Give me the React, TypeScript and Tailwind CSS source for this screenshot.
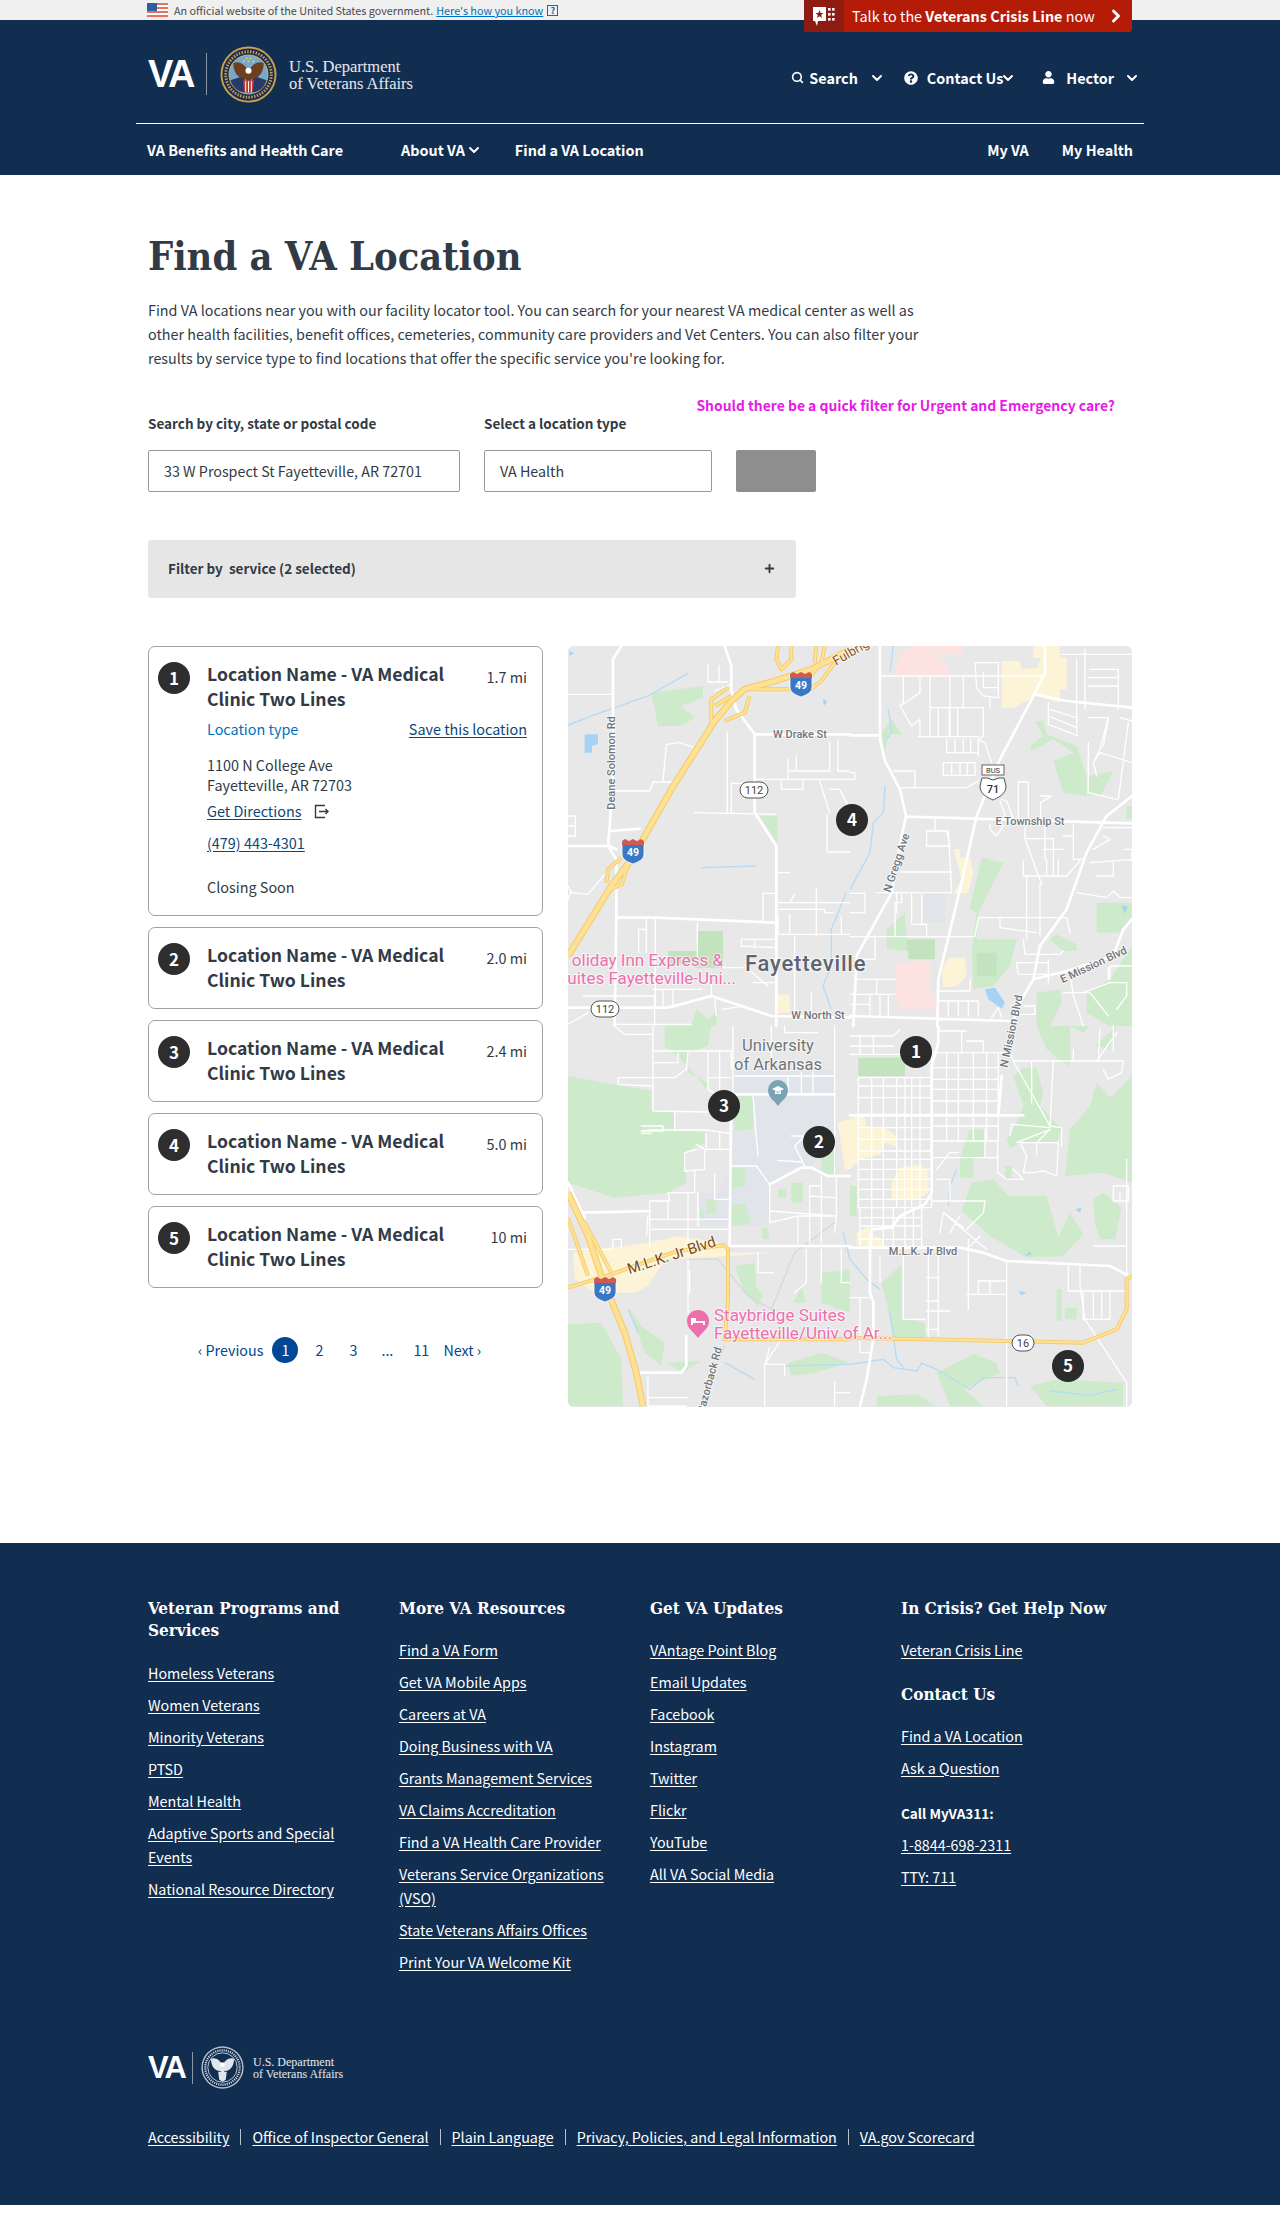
import React from 'react';
import { ChevronDown, ChevronRight, Plus, Search } from 'lucide-react';
import { FaQuestionCircle, FaUser } from 'react-icons/fa';

// Map geometry traced per quadrant at 3x, every quadrant is 282x380 in the final map
type Quad = {
  ox: number; oy: number;
  campus?: string; green?: string; dark?: string; cream?: string; pink?: string; water?: string; river?: string;
  rail?: string; minor: string; major: string; hwy?: string; hwyMain?: string;
};

const gridPath = (xs: number[], ys: number[]) => {
  let d = '';
  for (const x of xs) d += `M${x} ${ys[0]}V${ys[ys.length - 1]}`;
  for (const y of ys) d += `M${xs[0]} ${y}H${xs[xs.length - 1]}`;
  return d;
};

const QUADS: Quad[] = [
  {
    ox: 0, oy: 0,
    green: 'M250 140L405 120L405 155L340 180L380 215L340 240L270 240Z M575 510H628V590Z M370 1140L385 1090L420 1120L450 1090L445 1140Z',
    dark: 'M390 855H465V965H380V955H300V915H385Z',
    cream: 'M625 1045H665V1100H625Z',
    water: 'M50 265H90V295L72 300V320H50Z M765 160L778 165L768 180Z M5 15L18 22L5 30Z',
    river: 'M0 238L70 210L150 182L240 150L360 82 M400 665L565 660 M835 740L790 850L790 960L765 1020L790 1090',
    minor: 'M0 145H135 M145 435H245L255 408H310 M285 405L295 295L335 290L380 305 M420 55V108H480 M453 58V108 M440 135L490 115 M478 258V500 M380 500L625 505 M490 500V412H560 M560 400H846 M660 340V400 M685 330V375 M665 375H785V290 M810 280V375H846 M640 405V430H705V405 M755 405L785 500 M785 430H815L846 490 M777 505V618H846 M630 680H665 M585 825V742H625 M630 770H846 M680 745L665 770 M745 725V870 M630 790H770V800H795 M630 865H846 M680 870V1110 M730 1040V1100 M630 805V865 M665 805V860 M820 810V865 M520 880H620 M520 880V900L620 905 M560 880V905 M0 510H22V570H0 M0 540H22 M0 720L10 740L60 745L115 680 M0 760L10 735 M235 820V920 M262 820V1080 M388 830V960 M210 850H235 M212 850V920 M465 965H525 M530 960L600 1020 M45 1050H260V1140 M285 1030V1085 M315 1030V1085 M255 1030H400 M430 1000V1050 M440 1060L445 1110 M465 1090L530 1080 M0 1135L60 1100 M140 1135H370 M555 1010H620',
    major: 'M160 0L135 40V380L125 545L120 600L145 640V815L140 1140 M470 0L490 60V130L505 190L560 265V500L625 600V1140 M560 265H846 M130 555L215 548 M0 600H125L145 610 M150 815H260L620 830 M0 1085H300L430 1050L610 1110L846 1115',
    hwyMain: 'M0 930L130 720L190 640L310 430L440 225L490 165L530 130L620 105L730 70L810 30L846 10',
    hwy: 'M430 230V160L480 125 M440 180L490 150 M470 225L530 200L545 150 M550 130H660L720 135L760 105L800 50 M630 0L625 40L640 70L670 40V0 M770 0L760 50L720 100 M745 0L740 50 M115 710L120 670L160 635 M160 720L180 655 M130 730L160 715',
  },
  {
    ox: 282, oy: 0,
    pink: 'M135 85L150 20L190 0H340V25H255L295 60V95Z M135 950L240 945V1040L265 1060V1090H155L135 1060Z',
    cream: 'M455 45H510L515 70L560 65L575 35H550V0H630V35H650V130H630V170L560 150L490 185H455Z M310 610H330V635H360L370 680L355 740L310 745L335 700Z M275 975L295 935H345L350 990L320 1020L280 1025Z',
    green: 'M95 260L125 220L155 265H115L105 320Z M540 300L580 270L555 225H580L590 265L680 300L710 390V450L640 440L610 345L670 320L610 280L545 315Z M715 390L790 375L755 445L715 450Z M395 635L460 650L385 800L380 880H500L480 960L430 1020L370 1030L365 910L380 800L358 790Z M740 770H846V810L810 860H740Z M110 850L165 800L170 880H175V915L110 910Z M600 880L620 865L680 895V915H640Z M846 480H830V520H846Z M560 1040L630 1030L635 1070L600 1140H560Z M710 1040L780 1000L846 900V1140H775L710 1100Z',
    dark: 'M170 880H255V940H175V915H170Z M380 920H440V990H380Z',
    campus: 'M220 740H285V830H220Z',
    water: 'M405 1030L435 1025L465 1070L455 1088L415 1060Z M815 780H832L825 805Z',
    river: 'M105 420L100 500L70 530L60 620L0 730 M130 0L120 80 M115 190L125 260L110 280',
    minor: 'M90 90H585 M240 90V270 M160 90V170L150 180L185 240L210 220V270 M210 95V140L160 175 M300 95V270 M340 95V185 M240 185H400V270L385 280V330 M265 185V270 M298 185V270 M323 185V270 M205 272H385 M375 50H445V155L400 150L380 125Z M400 80V125H445 M420 155V185 M385 280L405 290L425 350 M290 280V320H385 M315 280V320 M340 280V320 M362 280V320 M280 350H375V388H280Z M305 350V388 M330 350V388 M352 350V388 M130 375H195V425H155 M155 425H350L385 405 M0 380H15V400H0 M230 555H290L300 600H230Z M255 515V555 M295 555L305 740 M150 678H305 M80 740H305 M0 742H45V800H0 M155 740V770H135V870 M185 740V830 M215 745V835 M185 835H230V870 M0 872H375 M375 870L385 815H650L660 860 M450 815V845L560 860 M530 690V880 M570 715V870 M525 578L575 715 M525 578H610V690 M520 645V690H650L690 645 M590 640V690 M625 640V690 M525 545V578 M585 530V640 M640 570H670V640H700 M670 535V600 M580 610H640 M720 650L846 640 M740 690H790V650 M680 740L770 755L790 735L810 755H846 M825 610H846V645 M760 570L780 580L730 610 M760 545H846 M595 170V235L685 270 M600 190L680 215 M595 210L680 245 M635 25H846 M705 10V190 M680 40V260 M720 70H805V190 M715 95H805 M715 120H805 M715 215H775L750 310L730 350L740 390 M775 220L760 300 M730 350L750 320L846 350 M810 215L846 225 M835 230L805 460 M715 290V440L800 460 M455 460L470 465L490 520 M450 465L470 520 M505 408H535V520 M505 408V520 M572 450H605L572 470V525 M420 535V550L440 570L460 540 M520 880L525 925H630L640 915 M500 950H595V985H505Z M595 940V1010 M660 975L670 1050L700 1140 M640 1040H720L775 1110 M700 1040L780 1010H830V1050L800 1090 M780 1000V960H846 M775 965V1000 M20 1000H135 M80 1000V1045 M0 1045H135 M60 1045V1110 M90 1045V1110 M115 1045V1110 M0 1075H60 M270 1035H360V1000 M265 1065H385V1110 M295 1065V1110 M325 1065V1110 M355 1065V1110 M425 1115L445 1085L455 1115 M520 1080H555V1105H510 M140 740V800 M20 940H75V870',
    major: 'M90 0V280L105 345L150 430L168 510L155 570L125 740L20 930L10 1140 M0 268H90 M168 512L846 532 M585 0V80L545 160L450 340L380 510L330 730L265 1000L262 1140 M555 145L650 165L846 185 M846 450L770 510L710 620L650 790L570 900L550 1000L510 1070L490 1125 M0 1110L480 1125 M550 1000L650 975L790 930L820 850L846 820',
  },
  {
    ox: 0, oy: 380,
    campus: 'M490 130H800V210H490Z M555 210H800V350L790 370L730 420H700L605 475L570 390Z M490 315H555L605 475V590L580 600H400L390 500H450L490 420Z',
    green: 'M0 150L250 195V250L320 260V310L410 320V350L350 380L355 470L300 500L140 515L0 470Z M290 0H430L420 60L360 80V140L420 170L415 190L360 120L290 60Z M495 210H555V310L500 315Z M490 425H530V480L490 490Z M490 535H530L550 590L490 600Z M415 520H445V565H415Z M395 550H407V580H395Z M580 605H600L605 640H585Z M630 490H655V515H630Z M670 470H705V530H670Z M500 720L560 710L565 780L585 810L570 840L530 800Z M675 830L700 780L715 830Z M760 740L846 730V860L760 830Z M760 360H805V445H760Z M0 895L100 890L160 1000L165 1140H0Z M180 840L220 900L290 950L280 1020L230 980Z M295 1010L400 1005L345 1040Z M660 1010L760 980L846 1010L740 1040L670 1050Z',
    cream: 'M15 680L240 650L330 630L450 650L490 680H610L490 690L290 700L240 780L200 800H80L20 760Z M810 290L846 280V430H830Z',
    river: 'M180 850L210 920 M470 1010L560 1060 M650 1020L846 1015 M825 620L846 700',
    rail: 'M360 700H450L540 810L610 850L680 680L800 590 M470 960L400 1140',
    minor: 'M255 0V255L420 258 M255 75H490V130 M255 110H330V80 M360 80L355 130L320 155H150V175L250 180 M420 80V190L445 205 M425 155H490 M455 80V190 M320 258V315 M220 300H285V315H220L250 312H415L485 322 M220 322H250 M415 322V370H485 M455 322V365 M350 380L385 370 M350 380V435L410 430V370 M385 355L410 370 M380 435V500 M440 445V520H490 M380 500H300L305 525H245V660 M360 500V660 M390 500V600 M245 580H480 M245 610H480 M300 525V580 M240 570L235 630 M135 670V640H160V670 M490 420H565L605 475V590L690 570H800 M605 555L800 570 M690 570V650 M725 480V650 M760 450V650 M805 450V570L800 620 M725 510L800 515 M725 480H760 M555 210L570 390 M670 330H710L680 360L710 420 M630 403L700 408 M500 150H800 M495 0V205 M610 0V130 M650 0V20H750 M700 140V205 M735 140V205 M660 150V205 M570 680V740H615 M715 670V770L680 800 M760 670V770 M820 670V770H846 M360 700V860 M365 735V800 M140 850L170 925L205 1030 M140 0L170 25H255 M605 965L590 1020V1140 M640 940L590 1015H650V1050 M240 1050V1140H355 M240 1115H360 M800 1100H846 M800 1070V1140 M800 0V450 M0 670H130',
    major: 'M490 200L485 660 M490 205H800 M480 660H846 M605 475L700 425H730L780 450H846 M0 470L50 575 M355 930V1020L340 1040H215 M45 560L245 555',
    hwy: 'M0 785L130 745L200 720L330 675L470 658L480 670V820L470 940H846 M0 575L60 750 M50 590L130 740',
    hwyMain: 'M0 500L60 630L100 750L170 920L205 1040L225 1140',
  },
  {
    ox: 282, oy: 380,
    cream: 'M0 280L40 265L50 300L105 305L125 320L145 340L135 360L105 350L90 385L30 400L0 430Z M125 470L150 425L205 415L235 435V500L200 520H125Z M20 620L55 600L70 630L100 640L95 670L20 655Z',
    green: 'M330 395L360 310H405V395H370V455H330Z M520 125H560L580 200L570 240L635 310L620 350H510L480 370L470 340L500 290L520 240L490 150Z M645 450L660 310L720 240L740 170L780 215L846 150V470L760 440Z M335 555L365 470L430 460L475 510H590L625 635L660 560L700 625L640 690L530 695L420 630Z M730 520L760 500L815 545L795 640H750L735 590Z M95 770L155 715V875L225 890V940H130L110 830Z M620 790H635V885H620Z M645 845H680V880H645Z M260 1040L370 985L440 1010L450 1040L340 1090L400 1140H300Z M80 1110L200 1105L260 1140H80Z M540 1080L620 1060L820 1070V1140H590Z M560 0H660V120L640 110L590 70Z M735 60L800 0L780 70Z M660 0H720L700 20Z M465 420H485V460H465Z M0 480H20V570H0Z',
    dark: 'M25 95H165V150H25Z',
    water: 'M505 795L530 800L515 808Z M525 690L540 675L545 685Z M675 550L695 545L690 560Z',
    river: 'M0 1015L100 1000L130 1025L200 1035L215 1012L260 1030L360 1090L400 1055H495L505 1080 M120 860L140 1000L160 1025 M600 1095L720 1108L800 1090 M0 700L50 760L90 790 M320 430L300 480L295 540',
    minor:
      gridPath([25, 65, 100, 140, 165, 185, 210, 245], [155, 180, 215, 265, 305, 340, 375, 400, 430, 460, 490, 520, 545]) +
      gridPath([30, 65, 100, 130, 165, 190, 215], [545, 575, 600, 640, 665]) +
      gridPath([245, 290, 325, 370, 410, 445], [80, 125, 160, 190, 225, 265, 300, 345]) +
      ' M245 80H480L490 105H820 M820 105L815 140L775 160L760 130 M490 105L600 300 M545 105V230 M610 105L600 300L635 305V360 M500 350L600 310L560 350V385 M510 350L530 390L520 440H550L580 435L620 450L625 350H510 M480 330L485 295L600 305 M470 460H520L490 430 M443 345V440L470 460 M245 395H445 M405 310V395 M260 430L300 380H325 M260 460H300V520 M245 525H405L400 560L350 610 M340 605L280 560L270 620 M280 560L410 670 M300 620L330 570 M355 665L390 630 M355 640V850 M350 805H470V765 M385 805V765H470 M420 765V805 M470 710V1140 M730 660H830V710 M655 720V795H830 M690 720V780L705 880L830 1070V1140 M700 800V880 M730 800V880 M755 800V880 M780 800V880 M700 880H780 M830 400V750 M790 480H835V525H790V480 M810 525V500 M160 690V880H225 M235 690V940 M265 690V930 M230 755H265 M230 825H265 M230 855H300 M230 910H265 M0 815H60 M30 815V980H60 M90 690V770 M0 30H130L150 10 M0 60H130 M0 85H150 M30 30V85 M70 30V85 M270 15H350 M335 15V80 M350 45H400V80 M670 70V105 M740 105L800 20 M790 75V0 M745 105L750 10',
    major: 'M265 0V50L245 120V500L225 535L150 570L125 605L65 610L60 660V800L70 830V940L50 1060L30 1140 M0 665H330L400 680L470 705L780 720L846 755 M455 150L445 270 M0 268H520',
    hwy: 'M0 935L700 950L800 910L830 850V760L846 750',
  },
];

const MAP_TEXT = "#70757a";

const Shield = ({ x, y, n }: { x: number; y: number; n: string }) => (
  <g transform={`translate(${x} ${y})`}>
    <path d="M-11 -10H11V3C11 9 5 11 0 13C-5 11 -11 9 -11 3Z" fill="#3b78c4" stroke="#fff" strokeWidth="0.8" />
    <path d="M-11 -10L-8 -12L-4 -10L0 -12L4 -10L8 -12L11 -10V-6H-11Z" fill="#d05a52" />
    <text x="0" y="5" textAnchor="middle" fontSize="10.5" fontWeight="700" fill="#fff">{n}</text>
  </g>
);

const RoadBadge = ({ x, y, n, w = 28 }: { x: number; y: number; n: string; w?: number }) => (
  <g transform={`translate(${x} ${y})`}>
    <rect x={-w / 2} y="-8" width={w} height="16" rx="8" fill="#fff" stroke="#555" strokeWidth="1" />
    <text x="0" y="4" textAnchor="middle" fontSize="11" fill="#444">{n}</text>
  </g>
);

const Label = ({ x, y, s, rot = 0, size = 11, fill = MAP_TEXT, weight = 500, anchor = 'middle', spacing = 0 }: { x: number; y: number; s: string; rot?: number; size?: number; fill?: string; weight?: number; anchor?: 'middle' | 'start' | 'end'; spacing?: number }) => (
  <text
    transform={`translate(${x} ${y}) rotate(${rot})`}
    textAnchor={anchor}
    fontSize={size}
    fill={fill}
    fontWeight={weight}
    letterSpacing={spacing}
    stroke="#ffffff"
    strokeWidth="2"
    paintOrder="stroke"
    strokeOpacity="0.65"
  >
    {s}
  </text>
);

const Pin = ({ x, y, n }: { x: number; y: number; n: string }) => (
  <g transform={`translate(${x} ${y})`}>
    <circle r="16" fill="#2b2b2b" />
    <text x="0" y="6" textAnchor="middle" fontSize="17" fontWeight="700" fill="#fff" fontFamily="'Noto Sans CJK SC', sans-serif">{n}</text>
  </g>
);

const MapView = () => (
  <div className="w-[564px] h-[761px] rounded-md overflow-hidden bg-[#e8e8e8] shrink-0">
    <svg viewBox="0 0 564 761" width="564" height="761" fontFamily="Roboto, 'Liberation Sans', sans-serif">
      <rect width="564" height="761" fill="#e8e8e8" />
      {QUADS.map((q) => (
        <g key={`f${q.ox}-${q.oy}`} transform={`translate(${q.ox} ${q.oy}) scale(0.3333)`}>
          {q.campus && <path d={q.campus} fill="#e1e5ea" />}
          {q.green && <path d={q.green} fill="#cdebca" />}
          {q.dark && <path d={q.dark} fill="#c2e3be" />}
          {q.cream && <path d={q.cream} fill="#fdf3d6" />}
          {q.pink && <path d={q.pink} fill="#fce3e1" />}
          {q.water && <path d={q.water} fill="#a6d3f5" />}
          {q.river && <path d={q.river} fill="none" stroke="#b5dbf7" strokeWidth="4" />}
          {q.rail && <path d={q.rail} fill="none" stroke="#d8d8d8" strokeWidth="4" />}
        </g>
      ))}
      {QUADS.map((q) => (
        <g key={`m${q.ox}-${q.oy}`} transform={`translate(${q.ox} ${q.oy}) scale(0.3333)`} fill="none" strokeLinejoin="round" strokeLinecap="round">
          <path d={q.minor} stroke="#fff" strokeWidth="4" />
          <path d={q.major} stroke="#fff" strokeWidth="8" />
        </g>
      ))}
      {QUADS.map((q) => (
        <g key={`h${q.ox}-${q.oy}`} transform={`translate(${q.ox} ${q.oy}) scale(0.3333)`} fill="none" strokeLinejoin="round">
          {q.hwy && <path d={q.hwy} stroke="#f6c961" strokeWidth="12" />}
          {q.hwyMain && <path d={q.hwyMain} stroke="#f6c961" strokeWidth="20" />}
          {q.hwy && <path d={q.hwy} stroke="#fde296" strokeWidth="7" />}
          {q.hwyMain && <path d={q.hwyMain} stroke="#fde296" strokeWidth="14" />}
        </g>
      ))}

      <Label x={290} y={7} s="Fulbright" rot={-30} size={13} fill="#8a5a20" weight={400} />
      <Label x={232} y={92} s="W Drake St" />
      <Label x={47} y={117} s="Deane Solomon Rd" rot={-90} />
      <Label x={332} y={218} s="N Gregg Ave" rot={-72} />
      <Label x={462} y={179} s="E Township St" />
      <Label x={527} y={322} s="E Mission Blvd" rot={-25} />
      <Label x={447} y={386} s="N Mission Blvd" rot={-78} />
      <Label x={250} y={373} s="W North St" />
      <Label x={355} y={609} s="M.L.K. Jr Blvd" />
      <Label x={105} y={614} s="M.L.K. Jr Blvd" rot={-18} size={15} fill="#7a4a14" weight={400} />
      <Label x={145} y={735} s="Razorback Rd" rot={-75} />
      <Label x={177} y={325} s="Fayetteville" size={22} fill="#5d6570" anchor="start" spacing={0.8} />
      <Label x={210} y={405} s="University" size={16.5} weight={400} />
      <Label x={210} y={424} s="of Arkansas" size={16.5} weight={400} />
      <Label x={155} y={320} s="oliday Inn Express &" size={17} fill="#ee6fae" anchor="end" weight={400} />
      <Label x={168} y={338} s="uites Fayetteville-Uni..." size={17} fill="#ee6fae" anchor="end" weight={400} />
      <Label x={146} y={675} s="Staybridge Suites" size={17} fill="#ee6fae" anchor="start" weight={400} />
      <Label x={146} y={693} s="Fayetteville/Univ of Ar..." size={17} fill="#ee6fae" anchor="start" weight={400} />

      <g transform="translate(130 677)">
        <path d="M0 15C-4 9 -11 6 -11 -2A11 11 0 0 1 11 -2C11 6 4 9 0 15Z" fill="#ee6fae" />
        <path d="M-7 -5V2H-5V0H5V2H7V-2H-2V-5Z" fill="#fff" />
      </g>
      <g transform="translate(210 445)">
        <path d="M0 15C-3 10 -10 7 -10 -1A10 10 0 0 1 10 -1C10 7 3 10 0 15Z" fill="#7aa3b5" />
        <path d="M-6 -2L0 -5L6 -2L0 1Z M-3 0V3H3V0L0 2Z" fill="#fff" />
      </g>

      <Shield x={233} y={38} n="49" />
      <Shield x={65} y={205} n="49" />
      <Shield x={37} y={643} n="49" />
      <RoadBadge x={186} y={144} n="112" />
      <RoadBadge x={37} y={363} n="112" />
      <RoadBadge x={455} y={697} n="16" w={22} />
      <g transform="translate(425 143)">
        <rect x="-11" y="-24" width="22" height="10" fill="#fff" stroke="#444" strokeWidth="0.8" />
        <text x="0" y="-16" textAnchor="middle" fontSize="7.5" fill="#333">BUS</text>
        <path d="M-11 -11H-6L0 -9L6 -11H11L13 -3C13 6 4 9 0 11C-4 9 -13 6 -13 -3Z" fill="#fff" stroke="#555" strokeWidth="1" />
        <text x="0" y="4" textAnchor="middle" fontSize="11" fontWeight="500" fill="#333">71</text>
      </g>

      <Pin x={348} y={406} n="1" />
      <Pin x={251} y={496} n="2" />
      <Pin x={156} y={460} n="3" />
      <Pin x={284} y={174} n="4" />
      <Pin x={500} y={720} n="5" />
    </svg>
  </div>
);

const Seal = ({ size, mono }: { size: number; mono?: boolean }) => (
  <svg width={size} height={size} viewBox="0 0 60 60" className="shrink-0">
    <circle cx="30" cy="30" r="29.5" fill={mono ? '#b5c0cd' : '#c9a24a'} />
    <circle cx="30" cy="30" r="27.5" fill={mono ? '#112e51' : '#232b48'} />
    <circle cx="30" cy="30" r="24" fill="none" stroke={mono ? '#dfe5ec' : '#b9a66a'} strokeWidth="3" strokeDasharray="1.5 1.5" />
    <circle cx="30" cy="30" r="20.5" fill={mono ? '#112e51' : '#78a9c9'} stroke={mono ? '#fff' : '#d8b860'} strokeWidth="1" />
    {!mono && (
      <>
        <path d="M11 36L26 31V49C18 48 13 43 11 36Z" fill="#273a68" />
        <path d="M49 36L34 31V49C42 48 47 43 49 36Z" fill="#273a68" />
        <circle cx="28" cy="13" r="1" fill="#e8cf6a" />
        <circle cx="32" cy="13" r="1" fill="#e8cf6a" />
        <circle cx="30" cy="16" r="1" fill="#e8cf6a" />
        <circle cx="25" cy="16" r="1" fill="#e8cf6a" />
        <circle cx="35" cy="16" r="1" fill="#e8cf6a" />
      </>
    )}
    <path d="M30 27C27 19 19 15 14 18C14 27 18 34 27 35L30 38L33 35C42 34 46 27 46 18C41 15 33 19 30 27Z" fill={mono ? '#dfe5ec' : '#6e3f1f'} />
    <circle cx="30" cy="26" r="3.2" fill="#fff" />
    <path d="M24 36H36L34.5 47L30 50L25.5 47Z" fill={mono ? '#dfe5ec' : '#c43a36'} />
    {!mono && <path d="M27 37V48M30 37V49M33 37V48" stroke="#fff" strokeWidth="1" />}
  </svg>
);

const VaLogo = ({ small }: { small?: boolean }) =>
  small ? (
    <div className="flex items-center text-white">
      <span className="font-['Liberation_Sans',sans-serif] font-bold text-[31px] leading-none tracking-[-2px] w-[40px]">VA</span>
      <span className="w-px h-[32px] bg-white/50 ml-[4px] mr-[8px]" />
      <Seal size={43} mono />
      <div className="ml-[9px] font-['Liberation_Serif',serif] text-[12px] leading-[12px] text-white/90">
        <div>U.S. Department</div>
        <div>of Veterans Affairs</div>
      </div>
    </div>
  ) : (
    <div className="flex items-center text-white">
      <span className="font-['Liberation_Sans',sans-serif] font-bold text-[38px] leading-none tracking-[-2.5px] w-[50px]">VA</span>
      <span className="w-px h-[42px] bg-white/50 ml-[8px] mr-[13px]" />
      <Seal size={57} />
      <div className="ml-[12px] mt-[1px] font-['Liberation_Serif',serif] text-[16.5px] leading-[17px] text-white/90">
        <div>U.S. Department</div>
        <div>of Veterans Affairs</div>
      </div>
    </div>
  );

const Flag = () => (
  <svg width="21" height="14" viewBox="0 0 21 14" className="shrink-0">
    <rect width="21" height="14" fill="#fff" />
    {[0, 4, 8, 12].map((y) => <rect key={y} y={y} width="21" height="2" fill="#e8705f" />)}
    <rect width="10" height="8" fill="#2f5f9e" />
  </svg>
);

const CrisisIcon = () => (
  <svg width="24" height="22" viewBox="0 0 24 22">
    <path d="M1 2H14V16H6L5 21L3 16H1Z" fill="#fff" />
    <path d="M7.5 5L8.6 8H11.5L9.2 10L10 13L7.5 11.2L5 13L5.8 10L3.5 8H6.4Z" fill="#8f1c13" />
    {[3, 8, 13].map((y) => [16, 20].map((x) => <rect key={`${x}-${y}`} x={x} y={y} width="2.6" height="2.6" fill="#fff" />))}
  </svg>
);

const Card = ({ n, mi, children }: { n: number; mi: string; children?: React.ReactNode }) => (
  <div className="border border-[#a0a0a0] rounded-[7px] pt-[14px] pb-[16px] pl-[9px] pr-[15px] flex">
    <span className="w-[32px] h-[32px] mt-[1px] rounded-full bg-[#2e2e2e] text-white font-bold text-[17px] flex items-center justify-center shrink-0">{n}</span>
    <div className="ml-[17px] flex-1">
      <div className="flex justify-between">
        <div className="text-[17.6px] leading-[25px] font-bold text-[#323a45] w-[260px]">
          Location Name - VA Medical Clinic Two Lines
        </div>
        <span className="text-[14.4px] leading-[26px] mt-[3px] text-[#323a45]">{mi}</span>
      </div>
      {children}
    </div>
  </div>
);

const LINK = 'text-[#0b4778] underline underline-offset-2';

const FooterList = ({ items }: { items: string[] }) => (
  <ul className="flex flex-col gap-[8px] w-[215px]">
    {items.map((t) => (
      <li key={t} className="text-[14.3px] leading-[24px] underline underline-offset-2">{t}</li>
    ))}
  </ul>
);

const FOOT_HEAD = "font-['DejaVu_Serif_Condensed','DejaVu_Serif',serif] font-bold text-[17px] leading-[22px]";

export default function App() {
  return (
    <div className="font-['Noto_Sans_CJK_SC','Liberation_Sans',sans-serif] bg-white text-[#323a45] w-full min-h-[2233px]">
      {/* gov banner */}
      <div className="relative h-[20px] bg-[#f0f0f0] flex items-center pl-[147px] text-[10.8px] leading-[20px] text-[#4a4a4a]">
        <Flag />
        <span className="ml-[6px]">An official website of the United States government.</span>
        <span className="ml-[3px] text-[#0071bc] underline">Here's how you know</span>
        <span className="ml-[4px] w-[11px] h-[11px] border border-[#0071bc] text-[#0071bc] text-[9px] leading-[10px] text-center font-bold">?</span>
        <div className="absolute z-10 left-[804px] top-0 w-[328px] h-[32px] bg-[#b51c08] rounded-b-[3px] flex items-center text-white overflow-hidden">
          <div className="w-[40px] h-full bg-[#8f1c13] flex items-center justify-center"><CrisisIcon /></div>
          <span className="ml-[8px] text-[14.4px] leading-[32px]">Talk to the <b className="font-bold">Veterans Crisis Line</b> now</span>
          <ChevronRight className="ml-[11px]" size={20} strokeWidth={3.5} />
        </div>
      </div>

      {/* header */}
      <header className="bg-[#112e51] h-[155px] text-white px-[148px]">
        <div className="h-[103px] flex items-center justify-between pt-[5px]">
          <VaLogo />
          <div className="flex items-center text-[14.4px] font-semibold mt-[8px] mr-[-8px]">
            <Search size={13} strokeWidth={3} />
            <span className="ml-[5px]">Search</span>
            <ChevronDown className="ml-[11px]" size={16} strokeWidth={3} />
            <FaQuestionCircle className="ml-[19px]" size={14} />
            <span className="ml-[9px]">Contact Us</span>
            <ChevronDown className="-ml-[3px]" size={16} strokeWidth={3} />
            <FaUser className="ml-[26px]" size={13} />
            <span className="ml-[11px]">Hector</span>
            <ChevronDown className="ml-[10px]" size={16} strokeWidth={3} />
          </div>
        </div>
        <div className="h-px bg-white -mx-[12px]" />
        <nav className="h-[51px] pt-[1px] flex items-center text-[14.4px] font-semibold -ml-[1px] -mr-[1px]">
          <span className="relative w-[254px]">
            VA Benefits and Health Care
            <ChevronDown className="absolute left-[133px] top-[4px]" size={15} strokeWidth={3} />
          </span>
          <span>About VA</span>
          <ChevronDown className="ml-[1px]" size={16} strokeWidth={3} />
          <span className="ml-[33px]">Find a VA Location</span>
          <span className="ml-auto">My VA</span>
          <span className="ml-[33px]">My Health</span>
        </nav>
      </header>

      <main className="px-[148px] pt-[57px] h-[1368px]">
        <h1 className="font-['DejaVu_Serif_Condensed','DejaVu_Serif',serif] font-bold text-[39.4px] leading-[48px] text-[#323a45]">Find a VA Location</h1>
        <p className="mt-[18px] w-[785px] text-[14.35px] leading-[24px]">
          Find VA locations near you with our facility locator tool. You can search for your nearest VA medical center as well as other health facilities, benefit offices, cemeteries, community care providers and Vet Centers. You can also filter your results by service type to find locations that offer the specific service you're looking for.
        </p>

        <div className="relative mt-[41px]">
          <span className="absolute right-[17px] top-[-18px] text-[13.9px] leading-[24px] font-semibold text-[#e81ae8]">
            Should there be a quick filter for Urgent and Emergency care?
          </span>
          <div className="flex items-start">
            <div className="w-[312px]">
              <div className="text-[13.5px] leading-[24px] font-semibold">Search by city, state or postal code</div>
              <div className="mt-[15px] h-[42px] border border-[#999] rounded-[2px] px-[15px] text-[14.3px] leading-[40px]">33 W Prospect St Fayetteville, AR 72701</div>
            </div>
            <div className="ml-[24px] w-[228px]">
              <div className="text-[13.5px] leading-[24px] font-semibold">Select a location type</div>
              <div className="mt-[15px] h-[42px] border border-[#999] rounded-[2px] px-[15px] text-[14.3px] leading-[40px]">VA Health</div>
            </div>
            <div className="ml-[24px] mt-[39px] w-[80px] h-[42px] rounded-[2px] bg-[#8e8e8e]" />
          </div>
        </div>

        <div className="mt-[48px] w-[648px] h-[58px] pb-[1px] bg-[#e6e6e6] rounded-[3px] flex items-center justify-between pl-[20px] pr-[20px] text-[13.5px] font-semibold">
          <span className="whitespace-pre">Filter by  service (2 selected)</span>
          <Plus size={13} strokeWidth={3.5} />
        </div>

        <div className="mt-[48px] flex gap-[25px]">
          <div className="w-[395px]">
            <div className="flex flex-col gap-[11px]">
              <Card n={1} mi="1.7 mi">
                <div className="mt-[8px] flex justify-between text-[14.4px] leading-[20px]">
                  <span className="text-[#0071bc]">Location type</span>
                  <span className={LINK}>Save this location</span>
                </div>
                <div className="mt-[16px] text-[14.4px] leading-[20px]">1100 N College Ave<br />Fayetteville, AR 72703</div>
                <div className="mt-[6px] flex items-center text-[14.4px] leading-[20px]">
                  <span className={LINK}>Get Directions</span>
                  <svg className="ml-[13px]" width="15" height="15" viewBox="0 0 15 15" fill="none" stroke="#323a45" strokeWidth="1.4">
                    <path d="M11 1.5H1.5V13.5H11M5 7.5H14M11.5 5L14 7.5L11.5 10" />
                  </svg>
                </div>
                <div className={`mt-[12px] text-[14.4px] leading-[20px] ${LINK}`}>(479) 443-4301</div>
                <div className="mt-[24px] mb-[2px] text-[14.4px] leading-[20px]">Closing Soon</div>
              </Card>
              <Card n={2} mi="2.0 mi" />
              <Card n={3} mi="2.4 mi" />
              <Card n={4} mi="5.0 mi" />
              <Card n={5} mi="10 mi" />
            </div>
            <div className="mt-[49px] flex items-center text-[14.3px] leading-[26px] text-[#004795] pl-[50px]">
              <span>‹ Previous</span>
              <span className="ml-[9px] w-[26px] h-[26px] rounded-full bg-[#004795] text-white text-center">1</span>
              <span className="ml-[4px] w-[34px] text-center">2</span>
              <span className="w-[34px] text-center">3</span>
              <span className="w-[34px] text-center">...</span>
              <span className="w-[34px] text-center">11</span>
              <span className="ml-[5px]">Next ›</span>
            </div>
          </div>
          <MapView />
        </div>
      </main>

      {/* footer */}
      <footer className="bg-[#112e51] h-[662px] text-white px-[148px] pt-[54px]">
        <div className="grid grid-cols-[251px_251px_251px_1fr] h-[449px]">
          <div>
            <h3 className={`${FOOT_HEAD} w-[210px] mb-[20px]`}>Veteran Programs and Services</h3>
            <FooterList items={['Homeless Veterans', 'Women Veterans', 'Minority Veterans', 'PTSD', 'Mental Health', 'Adaptive Sports and Special Events', 'National Resource Directory']} />
          </div>
          <div>
            <h3 className={`${FOOT_HEAD} mb-[19px]`}>More VA Resources</h3>
            <FooterList items={['Find a VA Form', 'Get VA Mobile Apps', 'Careers at VA', 'Doing Business with VA', 'Grants Management Services', 'VA Claims Accreditation', 'Find a VA Health Care Provider', 'Veterans Service Organizations (VSO)', 'State Veterans Affairs Offices', 'Print Your VA Welcome Kit']} />
          </div>
          <div>
            <h3 className={`${FOOT_HEAD} mb-[19px]`}>Get VA Updates</h3>
            <FooterList items={['VAntage Point Blog', 'Email Updates', 'Facebook', 'Instagram', 'Twitter', 'Flickr', 'YouTube', 'All VA Social Media']} />
          </div>
          <div>
            <h3 className={`${FOOT_HEAD} mb-[19px]`}>In Crisis? Get Help Now</h3>
            <FooterList items={['Veteran Crisis Line']} />
            <h3 className={`${FOOT_HEAD} mt-[21px] mb-[19px]`}>Contact Us</h3>
            <FooterList items={['Find a VA Location', 'Ask a Question']} />
            <div className="mt-[21px] mb-[8px] text-[13.5px] leading-[24px] font-bold">Call MyVA311:</div>
            <FooterList items={['1-8844-698-2311', 'TTY: 711']} />
          </div>
        </div>
        <VaLogo small />
        <div className="mt-[36px] flex items-center text-[14.3px] leading-[24px]">
          {['Accessibility', 'Office of Inspector General', 'Plain Language', 'Privacy, Policies, and Legal Information', 'VA.gov Scorecard'].map((t, i) => (
            <React.Fragment key={t}>
              {i > 0 && <span className="w-px h-[16px] bg-white/70 mx-[11px]" />}
              <span className="underline underline-offset-2">{t}</span>
            </React.Fragment>
          ))}
        </div>
      </footer>
    </div>
  );
}
